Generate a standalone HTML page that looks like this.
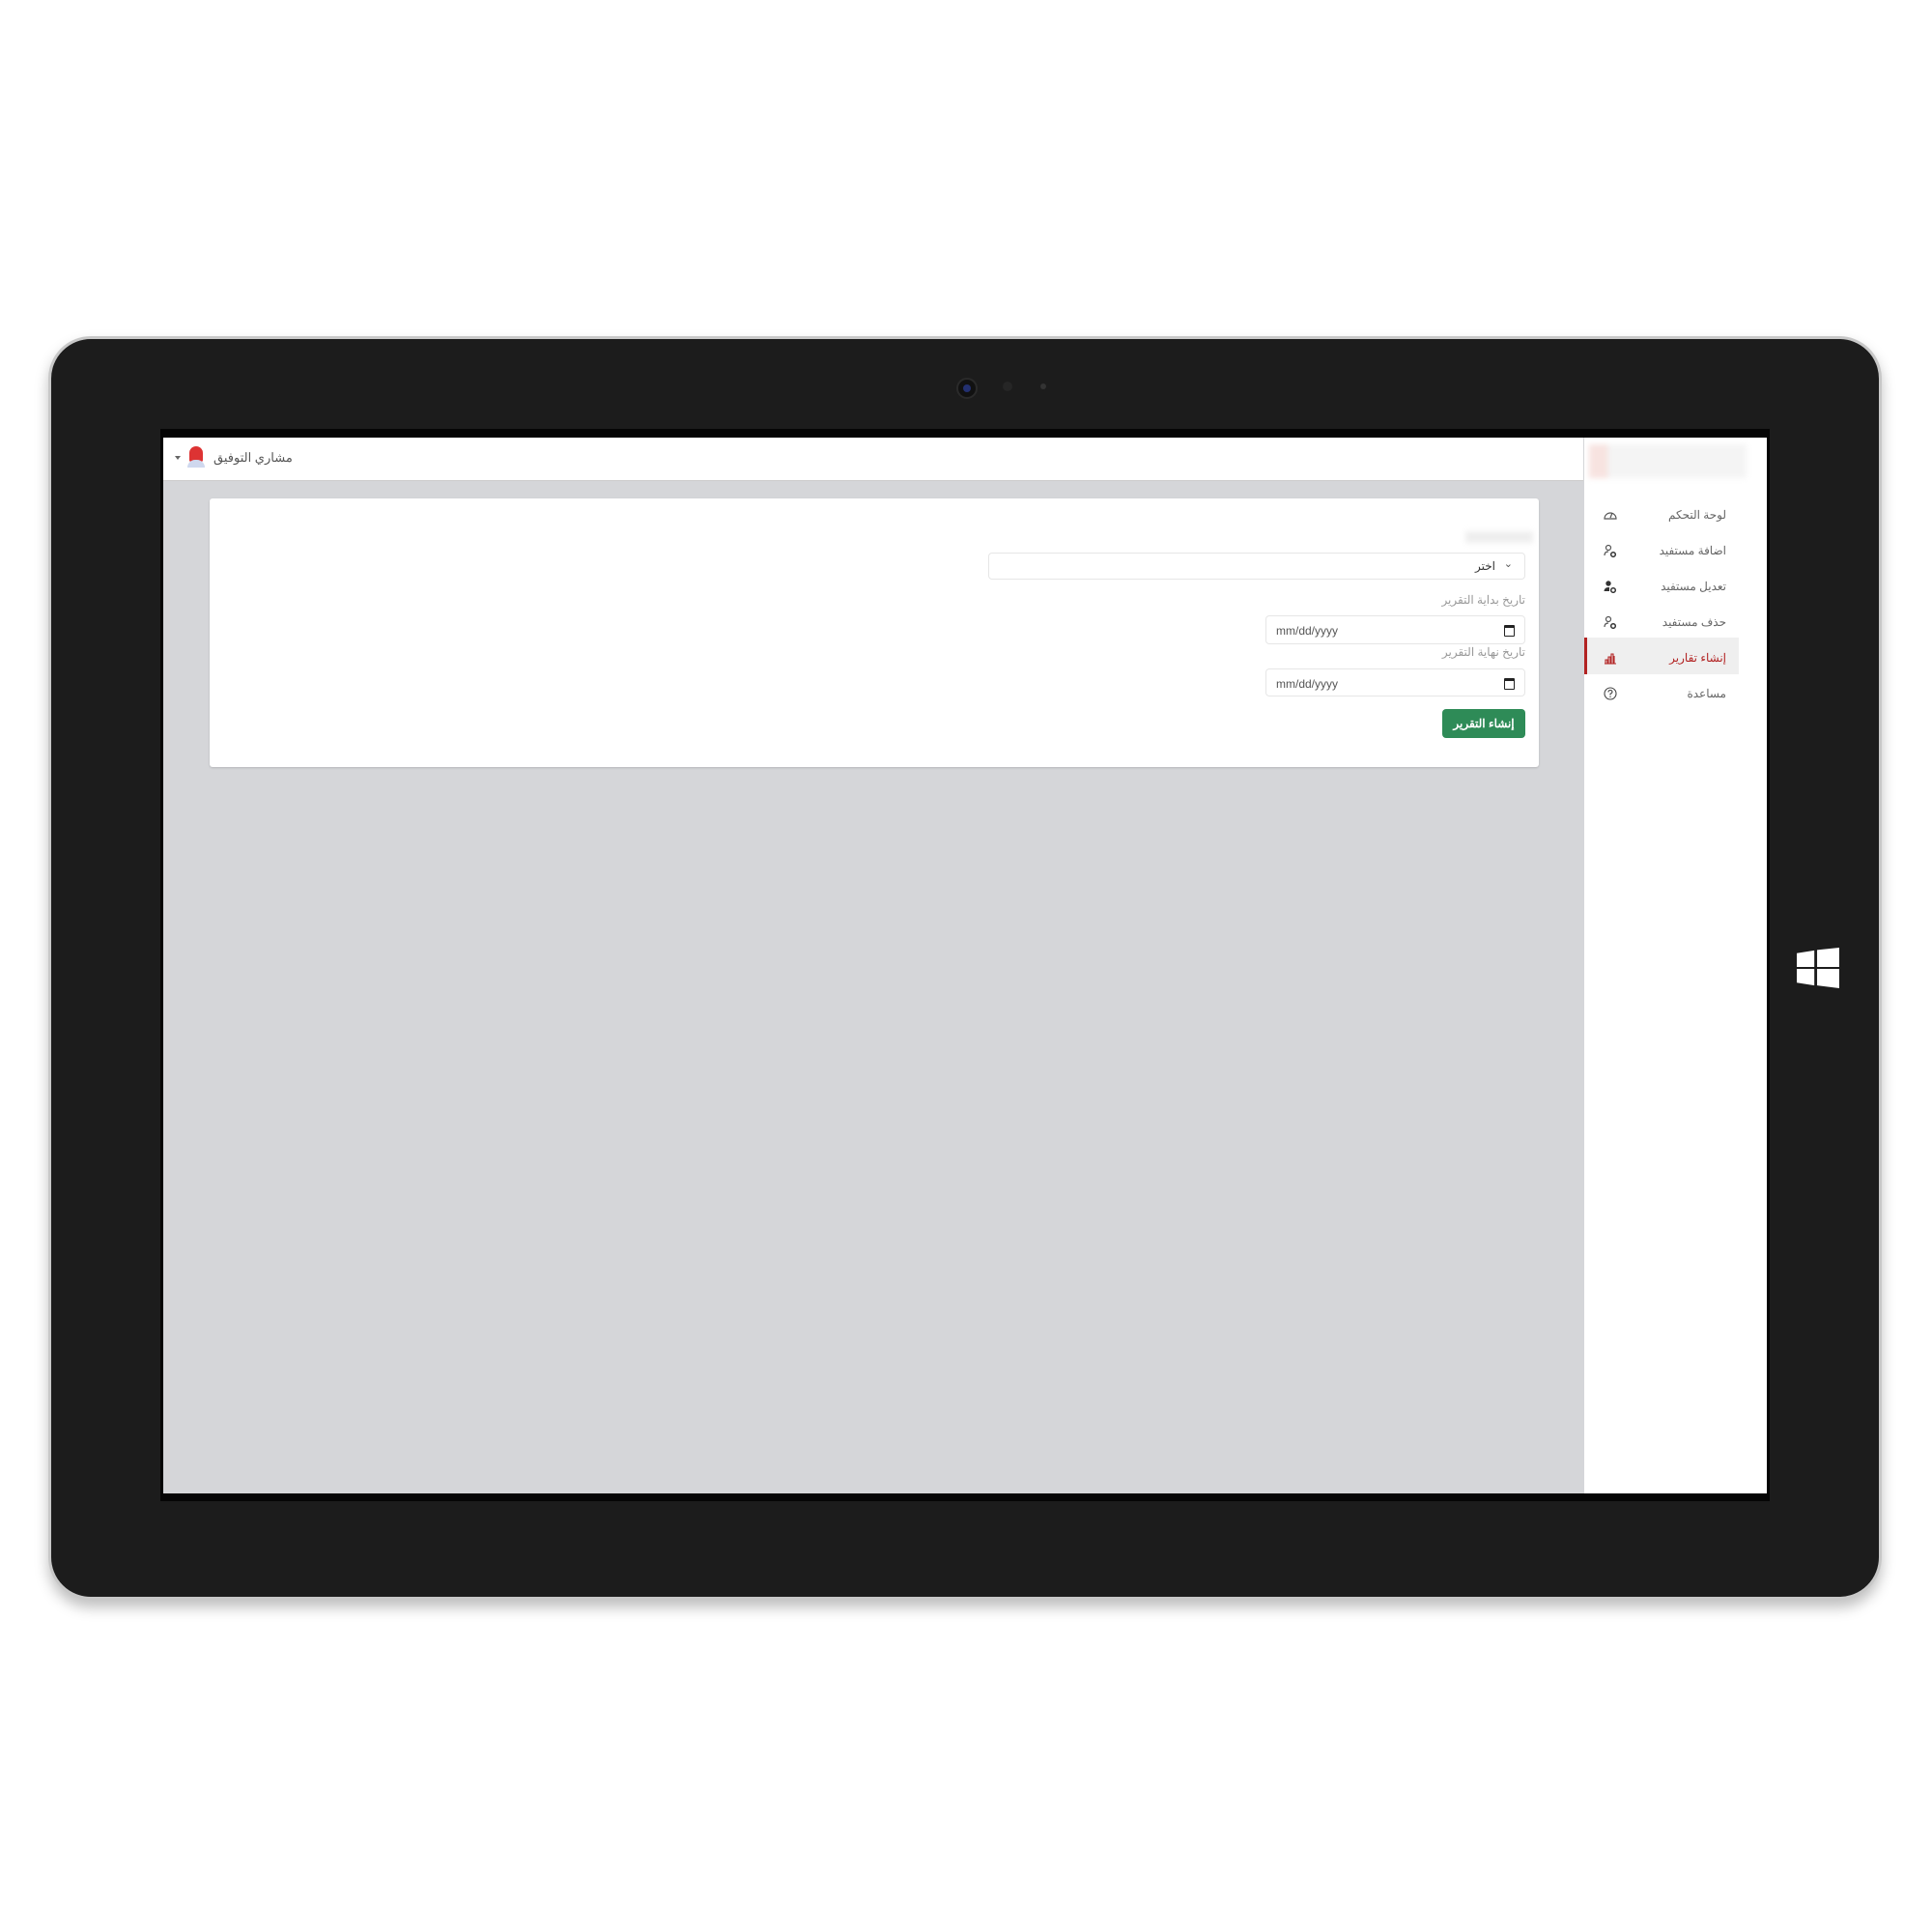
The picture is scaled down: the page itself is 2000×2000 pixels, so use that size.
<!DOCTYPE html>
<html><head><meta charset="utf-8"><style>
body{margin:0;width:2000px;height:2000px;background:#fff;position:relative;overflow:hidden;font-family:"Liberation Sans","Noto Sans CJK SC",sans-serif}
.a{position:absolute}
.frame{left:50px;top:348px;width:1898px;height:1308px;border-radius:44px;background:#1c1c1c;border:3px solid #c8c8c8;box-sizing:border-box;box-shadow:0 8px 14px rgba(0,0,0,.25)}
.screen{left:166px;top:444px;width:1666px;height:1110px;background:#050505}
.content{left:169px;top:453px;width:1660px;height:1093px;background:#d5d6d9}
.hdr{left:169px;top:453px;width:1470px;height:44px;background:#fff;border-bottom:1px solid #ccc}
.side{left:1640px;top:453px;width:189px;height:1093px;background:#fff}
.item{position:absolute;right:42px;font-size:12px;color:#666;direction:rtl}
.ic{position:absolute;left:20px;width:14px;height:14px}
.card{left:217px;top:516px;width:1376px;height:278px;background:#fff;border-radius:3px;box-shadow:0 1px 2px rgba(0,0,0,.15)}
.inp{position:absolute;background:#fff;border:1px solid #e6e6e6;border-radius:4px;box-sizing:border-box}
.lbl{position:absolute;font-size:12px;color:#999;direction:rtl}
.dt{font-size:12px;color:#555;position:absolute;left:10px;top:8px}
.cal{position:absolute;right:10px;top:9px;width:9px;height:8px;border:1.5px solid #222;border-top-width:3px;border-radius:1px}
</style></head><body>
<div class="a frame"></div>
<div class="a" style="left:990px;top:391px;width:18px;height:18px;border-radius:50%;background:#111;border:2px solid #2a2a2a"><div style="margin:5px;width:8px;height:8px;border-radius:50%;background:#233070"></div></div>
<div class="a" style="left:1038px;top:395px;width:10px;height:10px;border-radius:50%;background:#262626"></div>
<div class="a" style="left:1077px;top:397px;width:6px;height:6px;border-radius:50%;background:#333"></div>
<svg class="a" style="left:1860px;top:981px" width="44" height="42" viewBox="0 0 46 44"><path fill="#fff" d="M0 6L19 3V21H0ZM22 2.5L46 0V21H22ZM0 23H19V41L0 38ZM22 23H46V44L22 41Z"/></svg>
<div class="a screen"></div>
<div class="a content"></div>
<div class="a hdr"></div>
<div class="a" style="left:221px;top:466px;font-size:13px;color:#555;direction:rtl">مشاري التوفيق</div>
<div class="a" style="left:196px;top:462px;width:14px;height:16px;border-radius:7px 7px 2px 2px;background:#d33"></div>
<div class="a" style="left:194px;top:476px;width:18px;height:8px;border-radius:8px 8px 0 0;background:#cfd8ee"></div>
<div class="a" style="left:181px;top:472px;width:0;height:0;border:3px solid transparent;border-top:4px solid #666"></div>
<div class="a side">
 <div class="a" style="left:5px;top:7px;width:163px;height:35px;background:linear-gradient(90deg,#f7e3e0 0 12%,#f4f4f4 12%);filter:blur(3px)"></div>
 <div class="a" style="left:0;top:207px;width:160px;height:38px;background:#efefef;border-left:3px solid #b22222;box-sizing:border-box"></div>
 <div class="item" style="top:73px">لوحة التحكم</div>
 <div class="item" style="top:110px">اضافة مستفيد</div>
 <div class="item" style="top:147px">تعديل مستفيد</div>
 <div class="item" style="top:184px">حذف مستفيد</div>
 <div class="item" style="top:221px;color:#b22222">إنشاء تقارير</div>
 <div class="item" style="top:258px">مساعدة</div>
 <svg class="ic" style="top:73px" viewBox="0 0 14 14"><path d="M1 11A6 6 0 1 1 13 11Z M7 10L9 5" fill="none" stroke="#555" stroke-width="1.2"/></svg>
 <svg class="ic" style="top:110px" viewBox="0 0 14 14"><circle cx="5" cy="4" r="2.5" fill="none" stroke="#555" stroke-width="1.2"/><path d="M1 12Q1 8 5 8" fill="none" stroke="#555" stroke-width="1.2"/><circle cx="10" cy="11" r="2.3" fill="none" stroke="#333" stroke-width="1.5"/></svg>
 <svg class="ic" style="top:147px" viewBox="0 0 14 14"><circle cx="5" cy="4" r="2.7" fill="#333"/><path d="M0.5 12Q1 7.5 6 8V12Z" fill="#333"/><circle cx="10" cy="11" r="2.3" fill="none" stroke="#333" stroke-width="1.5"/></svg>
 <svg class="ic" style="top:184px" viewBox="0 0 14 14"><circle cx="5" cy="4" r="2.5" fill="none" stroke="#555" stroke-width="1.2"/><path d="M1 12Q1 8 5 8" fill="none" stroke="#555" stroke-width="1.2"/><circle cx="10" cy="11" r="2.3" fill="none" stroke="#333" stroke-width="1.5"/></svg>
 <svg class="ic" style="top:221px" viewBox="0 0 14 14"><path d="M1 13H13M2 13V9H4V13M5 13V6H7V13M8 13V3H10V13M11 13V5" fill="none" stroke="#b22222" stroke-width="1.1"/></svg>
 <svg class="ic" style="top:258px" viewBox="0 0 14 14"><circle cx="7" cy="7" r="6" fill="none" stroke="#444" stroke-width="1.1"/><path d="M5 5.5Q5 3.5 7 3.5Q9 3.5 9 5.3Q9 6.5 7 7.3V8.5" fill="none" stroke="#444" stroke-width="1.1"/><circle cx="7" cy="10.3" r=".7" fill="#444"/></svg>
</div>
<div class="a card">
 <div class="a" style="left:1300px;top:34px;width:70px;height:12px;background:#eee;filter:blur(3px)"></div>
 <div class="inp" style="left:806px;top:56px;width:556px;height:28px"><span style="position:absolute;right:30px;top:6px;font-size:12px;color:#333">اختر</span><span style="position:absolute;right:12px;top:4px;font-size:11px;color:#555">⌄</span></div>
 <div class="lbl" style="right:14px;top:98px">تاريخ بداية التقرير</div>
 <div class="inp" style="left:1093px;top:121px;width:269px;height:30px"><span class="dt">mm/dd/yyyy</span><span class="cal"></span></div>
 <div class="lbl" style="right:14px;top:152px">تاريخ نهاية التقرير</div>
 <div class="inp" style="left:1093px;top:176px;width:269px;height:29px"><span class="dt">mm/dd/yyyy</span><span class="cal"></span></div>
 <div class="a" style="left:1276px;top:218px;width:86px;height:30px;background:#2e8b57;border-radius:4px;color:#fff;font-size:12px;font-weight:bold;text-align:center;line-height:30px;direction:rtl">إنشاء التقرير</div>
</div>
</body></html>
